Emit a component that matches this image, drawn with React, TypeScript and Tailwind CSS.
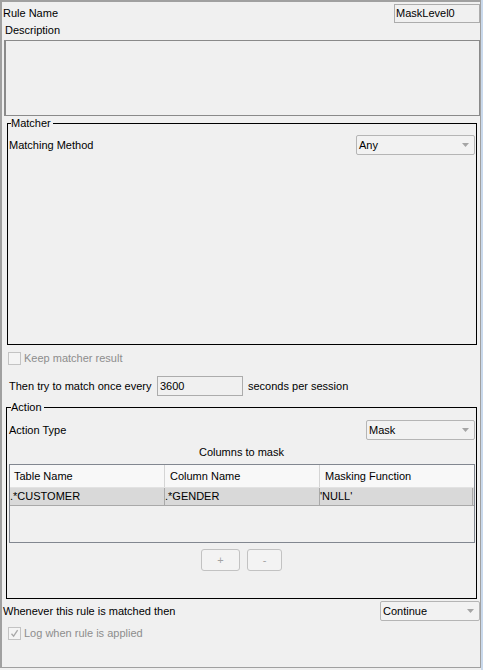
import React from "react";

const Arrow = () => (
  <svg width="7" height="4" viewBox="0 0 7 4" className="absolute right-[5px] top-1/2 -translate-y-1/2">
    <path d="M0 0 H7 L3.5 4 Z" fill="#a5a5a5" />
  </svg>
);

function Combo({ value, w }: { value: string; w: string }) {
  return (
    <div className={`relative h-[20px] ${w} border border-[#b5b5b5] rounded-[2px] bg-[#f2f2f2] flex items-center pl-[2px]`}>
      <span>{value}</span>
      <Arrow />
    </div>
  );
}

function CheckBox({ checked }: { checked?: boolean }) {
  return (
    <div className="w-[13px] h-[13px] border border-[#c3c3c3] bg-[#f4f4f4] flex items-center justify-center">
      {checked && (
        <svg width="9" height="9" viewBox="0 0 9 9">
          <path d="M1.5 4.8 L3.6 7.2 L7.6 1.2" stroke="#a8a8a8" strokeWidth="1.3" fill="none" />
        </svg>
      )}
    </div>
  );
}

export default function App() {
  return (
    <div
      className="w-[483px] h-[670px] bg-[#f0f0f0] flex text-[11px] leading-[13px] text-[#000]"
      style={{ fontFamily: '"Liberation Sans", Arial, sans-serif' }}
    >
      <div className="w-[481px] h-[668px] border-t-2 border-l-2 border-r border-b border-[#a0a0a0] flex flex-col">
        {/* Rule name */}
        <div className="mt-[2px] h-[19px] flex items-center justify-between">
          <span className="ml-[1px]">Rule Name</span>
          <div className="w-[86px] h-[19px] border border-[#acacac] bg-[#f0f0f0] flex items-center pl-[1px]">
            MaskLevel0
          </div>
        </div>
        <div className="h-[15px] flex items-center">
          <span className="ml-[3px]">Description</span>
        </div>
        <div className="mt-[2px] ml-[2px] w-[476px] h-[76px] border border-[#8a8a8a] border-l-2 bg-[#f0f0f0]" />

        {/* Matcher */}
        <fieldset className="mt-[1px] ml-[5px] w-[470px] h-[228px] border border-black">
          <legend className="ml-[3px] pr-[2px] leading-[13px]">Matcher</legend>
          <div className="mt-[5px] h-[20px] flex items-center justify-between">
            <span className="ml-[1px]">Matching Method</span>
            <div className="mr-[1px]">
              <Combo value="Any" w="w-[119px]" />
            </div>
          </div>
        </fieldset>

        <div className="mt-[6px] h-[14px] flex items-center">
          <div className="ml-[6px]">
            <CheckBox />
          </div>
          <span className="ml-[3px] text-[#8d8d8d]">Keep matcher result</span>
        </div>

        <div className="mt-[11px] h-[20px] flex items-center">
          <span className="ml-[7px] w-[148px]">Then try to match once every</span>
          <div className="w-[86px] h-[20px] border border-[#acacac] bg-[#f0f0f0] flex items-center pl-[2px]">3600</div>
          <span className="ml-[5px]">seconds per session</span>
        </div>

        {/* Action */}
        <fieldset className="mt-[5px] ml-[4px] w-[471px] h-[198px] border border-black">
          <legend className="ml-[4px] pr-[2px] leading-[13px]">Action</legend>
          <div className="mt-[6px] h-[20px] flex items-center justify-between">
            <span className="ml-[2px]">Action Type</span>
            <div className="mr-[1px]">
              <Combo value="Mask" w="w-[109px]" />
            </div>
          </div>
          <div className="mt-[5px] h-[14px] flex items-center justify-center">Columns to mask</div>
          <div className="mt-[5px] ml-[2px] w-[466px] h-[79px] border border-[#828790] bg-[#f0f0f0] flex flex-col">
            <div className="h-[23px] flex bg-[#f8f8f8] border-b border-[#e2e2e2]">
              <div className="w-[155px] flex items-center pl-[4px] border-r border-[#d5d5d5]">Table Name</div>
              <div className="w-[155px] flex items-center pl-[5px] border-r border-[#d5d5d5]">Column Name</div>
              <div className="flex-1 flex items-center pl-[5px]">Masking Function</div>
            </div>
            <div className="h-[18px] flex bg-[#d9d9d9] border-b border-[#a9a9a9]">
              <div className="w-[155px] flex items-center pl-[0px] border-r border-[#a9a9a9]">.*CUSTOMER</div>
              <div className="w-[155px] flex items-center pl-[0px] border-r border-[#a9a9a9]">.*GENDER</div>
              <div className="flex-1 flex items-center mr-[1px] border-r border-[#a9a9a9]">'NULL'</div>
            </div>
          </div>
          <div className="mt-[6px] flex justify-center gap-[7px]">
            <div className="w-[39px] h-[22px] border border-[#c2c2c2] rounded-[3px] bg-[#f3f3f3] flex items-center justify-center text-[#a3a3a3]">
              +
            </div>
            <div className="w-[35px] h-[22px] border border-[#c2c2c2] rounded-[3px] bg-[#f3f3f3] flex items-center justify-center text-[#a3a3a3]">
              -
            </div>
          </div>
        </fieldset>

        <div className="mt-[2px] h-[20px] flex items-center justify-between">
          <span className="ml-[1px]">Whenever this rule is matched then</span>
          <Combo value="Continue" w="w-[100px]" />
        </div>
        <div className="mt-[6px] h-[13px] flex items-center">
          <div className="ml-[6px]">
            <CheckBox checked />
          </div>
          <span className="ml-[3px] text-[#8d8d8d]">Log when rule is applied</span>
        </div>
      </div>
      <div className="w-[2px] h-[670px] bg-[#c9d9ec]" />
    </div>
  );
}
